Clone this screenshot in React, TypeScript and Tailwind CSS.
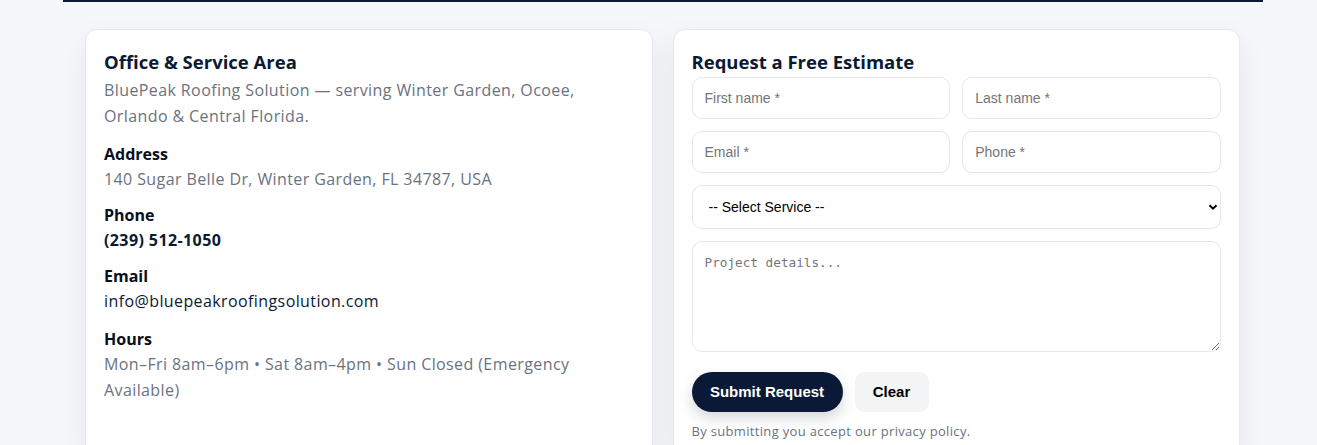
import React from "react";

const body = "font-['Open_Sans','Noto_Sans',sans-serif]";

function InfoItem({ label, children, top = "mt-[12px]" }: { label: string; children: React.ReactNode; top?: string }) {
  return (
    <div className={top}>
      <h4 className="text-[16px] font-bold leading-[22px] text-[#0a0f1c]">{label}</h4>
      <div className="mt-[1px] text-[16px] leading-[26px] tracking-[0.025em]">{children}</div>
    </div>
  );
}

const inputCls =
  "h-[42px] rounded-[10px] border border-[#e5e7eb] px-[12px] font-['Liberation_Sans',Arial,sans-serif] text-[14px] text-[#111] placeholder:text-[#757575] outline-none";

const card =
  "h-[430px] rounded-[12px] border border-[#e6e8ee] bg-white px-[18px] pt-[20px] shadow-[0_10px_30px_rgba(15,23,42,0.07)]";

export default function App() {
  return (
    <div className={`min-h-screen bg-[#f5f7fa] ${body}`}>
      <div className="ml-[63px] h-[2px] w-[1200px] bg-[#0b1a33]" />

      <div className="ml-[85px] grid w-[1155px] grid-cols-2 gap-[20px] pt-[27px]">
        {/* Office info */}
        <div className={card}>
          <h3 className="text-[18.5px] font-bold leading-[24px] text-[#0b1a33]">Office &amp; Service Area</h3>
          <p className="mt-[3px] text-[16px] leading-[26px] tracking-[0.025em] text-[#6b7280]">
            BluePeak Roofing Solution — serving Winter Garden, Ocoee, Orlando &amp; Central Florida.
          </p>

          <InfoItem label="Address" top="mt-[14px]">
            <span className="text-[#6b7280]">140 Sugar Belle Dr, Winter Garden, FL 34787, USA</span>
          </InfoItem>
          <InfoItem label="Phone">
            <span className="font-bold text-[#0b1a33]">(239) 512-1050</span>
          </InfoItem>
          <InfoItem label="Email">
            <span className="text-[#0b1a33]">info@bluepeakroofingsolution.com</span>
          </InfoItem>
          <InfoItem label="Hours" top="mt-[14px]">
            <span className="text-[#6b7280]">
              Mon–Fri 8am–6pm • Sat 8am–4pm • Sun Closed (Emergency Available)
            </span>
          </InfoItem>
        </div>

        {/* Estimate form */}
        <div className={card}>
          <h3 className="text-[18.5px] font-bold leading-[24px] text-[#0b1a33]">Request a Free Estimate</h3>
          <form className="mt-[3px] flex flex-col gap-[12px]" onSubmit={(e) => e.preventDefault()}>
            <div className="grid grid-cols-2 gap-[12px]">
              <input placeholder="First name *" className={inputCls} />
              <input placeholder="Last name *" className={inputCls} />
            </div>
            <div className="grid grid-cols-2 gap-[12px]">
              <input placeholder="Email *" className={inputCls} />
              <input placeholder="Phone *" className={inputCls} />
            </div>
            <div className="relative">
              <select
                defaultValue=""
                className="h-[44px] w-full appearance-none rounded-[10px] border border-[#e5e7eb] bg-white px-[16px] font-['Liberation_Sans',Arial,sans-serif] text-[14px] text-black outline-none"
              >
                <option value="">-- Select Service --</option>
                <option>Roof Replacement</option>
                <option>Roof Repair</option>
                <option>Inspection</option>
              </select>
              <svg
                className="pointer-events-none absolute right-[3px] top-1/2 -translate-y-1/2"
                width="10"
                height="10"
                viewBox="0 0 10 10"
              >
                <path d="M1.5 3.2 L5 6.7 L8.5 3.2" fill="none" stroke="#000" strokeWidth="2" />
              </svg>
            </div>
            <textarea
              placeholder="Project details..."
              className="h-[111px] rounded-[10px] border border-[#e5e7eb] px-[12px] py-[11px] font-['DejaVu_Sans_Mono',monospace] text-[12.7px] placeholder:text-[#757575] outline-none"
            />
            <div className="mt-[8px] flex gap-[12px]">
              <button
                type="submit"
                className="h-[40px] w-[151px] rounded-full bg-[#0a1a36] font-['Liberation_Sans',Arial,sans-serif] text-[15px] font-bold text-white shadow-[0_6px_14px_rgba(10,26,54,0.18)]"
              >
                Submit Request
              </button>
              <button
                type="reset"
                className="h-[40px] w-[74px] rounded-[10px] bg-[#f3f4f6] font-['Liberation_Sans',Arial,sans-serif] text-[15px] font-bold text-black"
              >
                Clear
              </button>
            </div>
          </form>
          <p className="mt-[10px] text-[13px] leading-[18px] tracking-[0.025em] text-[#6b7280]">
            By submitting you accept our privacy policy.
          </p>
        </div>
      </div>
    </div>
  );
}
